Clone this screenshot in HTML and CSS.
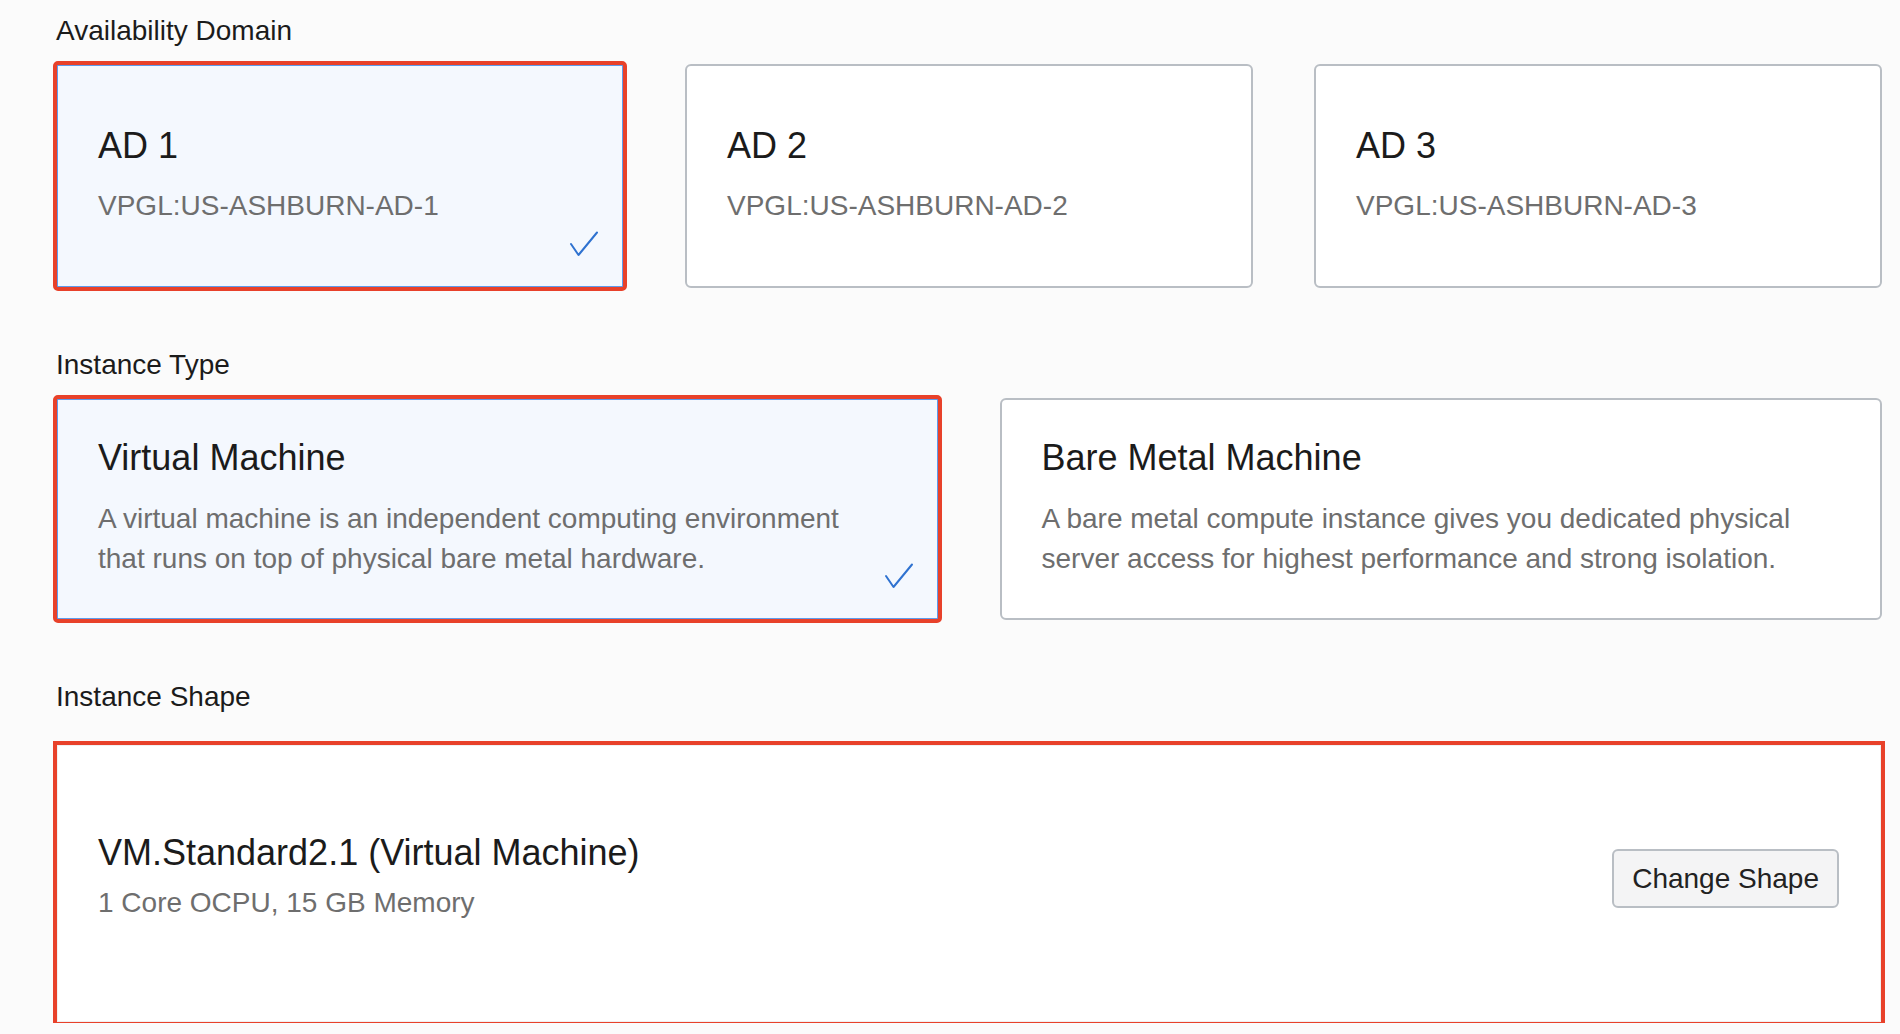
FILE: index.html
```html
<!DOCTYPE html>
<html lang="en">
<head>
<meta charset="utf-8">
<title>Create Instance</title>
<link rel="stylesheet" href="styles.css">
</head>
<body>
<main class="page">
  <section class="field">
    <div class="field-label">Availability Domain</div>
    <div class="cards cards-3">
      <div class="card card-ad is-selected">
        <div class="card-title">AD 1</div>
        <div class="card-sub">VPGL:US-ASHBURN-AD-1</div>
        <svg class="check" viewBox="0 0 28 26" width="28" height="26"><path d="M1 13 L8.5 24 L27 1.5"/></svg>
      </div>
      <div class="card card-ad">
        <div class="card-title">AD 2</div>
        <div class="card-sub">VPGL:US-ASHBURN-AD-2</div>
      </div>
      <div class="card card-ad">
        <div class="card-title">AD 3</div>
        <div class="card-sub">VPGL:US-ASHBURN-AD-3</div>
      </div>
    </div>
  </section>

  <section class="field">
    <div class="field-label">Instance Type</div>
    <div class="cards cards-2">
      <div class="card card-type is-selected">
        <div class="card-title">Virtual Machine</div>
        <div class="card-desc">A virtual machine is an independent computing environment that runs on top of physical bare metal hardware.</div>
        <svg class="check" viewBox="0 0 28 26" width="28" height="26"><path d="M1 13 L8.5 24 L27 1.5"/></svg>
      </div>
      <div class="card card-type">
        <div class="card-title">Bare Metal Machine</div>
        <div class="card-desc">A bare metal compute instance gives you dedicated physical server access for highest performance and strong isolation.</div>
      </div>
    </div>
  </section>

  <section class="field">
    <div class="field-label">Instance Shape</div>
    <div class="card card-shape">
      <div class="shape-info">
        <div class="card-title">VM.Standard2.1 (Virtual Machine)</div>
        <div class="shape-sub">1 Core OCPU, 15 GB Memory</div>
      </div>
      <button class="btn" type="button">Change Shape</button>
    </div>
  </section>
</main>
</body>
</html>
```

FILE: styles.css
```css
* { box-sizing: border-box; }

html, body {
  margin: 0;
  background: #fbfbfb;
}

body {
  font-family: "Liberation Sans", Arial, Helvetica, sans-serif;
  color: #1b1b1b;
}

.page {
  padding: 15px 18px 0 56px;
}

.field {
  display: flex;
  flex-direction: column;
}

.field + .field {
  margin-top: 61px;
}

.field-label {
  font-size: 28px;
  line-height: 32px;
  color: #1b1b1b;
  margin-bottom: 17px;
}

.cards {
  display: grid;
  gap: 61px;
}

.cards-3 { grid-template-columns: repeat(3, 1fr); }
.cards-2 { grid-template-columns: repeat(2, 1fr); }

.card {
  position: relative;
  background: #ffffff;
  border: 2px solid #b9bec4;
  border-radius: 6px;
}

.card.is-selected {
  background: #f4f8fe;
  border-color: #5e9bec;
  border-radius: 2px;
  outline: 4px solid #e8412a;
  outline-offset: -1px;
}

.card-title {
  font-size: 36px;
  line-height: 42px;
  color: #1b1b1b;
}

.card-sub,
.card-desc,
.shape-sub {
  font-size: 28px;
  color: #6e6e6e;
}

/* Availability domain cards */
.card-ad {
  height: 224px;
  padding: 59px 40px 0 40px;
}

.card-ad .card-sub {
  line-height: 32px;
  margin-top: 23px;
}

/* Instance type cards */
.card-type {
  height: 222px;
  padding: 37px 60px 0 40px;
}

.card-type .card-desc {
  line-height: 40px;
  margin-top: 20px;
}

/* Instance shape card */
.card-shape {
  margin-top: 14px;
  height: 279px;
  display: flex;
  align-items: flex-start;
  justify-content: space-between;
  padding: 86px 41px 0 40px;
  border-radius: 0;
  border-color: #f0f0f0;
  outline: 4px solid #e8412a;
  outline-offset: -1px;
}

.shape-sub {
  line-height: 32px;
  margin-top: 13px;
}

.check {
  position: absolute;
  right: 24px;
  bottom: 29px;
  overflow: visible;
}

.check path {
  fill: none;
  stroke: #2f72d0;
  stroke-width: 2;
  stroke-linecap: round;
  stroke-linejoin: round;
}

.btn {
  margin-top: 17px;
  height: 59px;
  padding: 0 18px;
  font-family: inherit;
  font-size: 28px;
  color: #222222;
  background: #f4f4f5;
  border: 2px solid #b9bec4;
  border-radius: 6px;
}
```
